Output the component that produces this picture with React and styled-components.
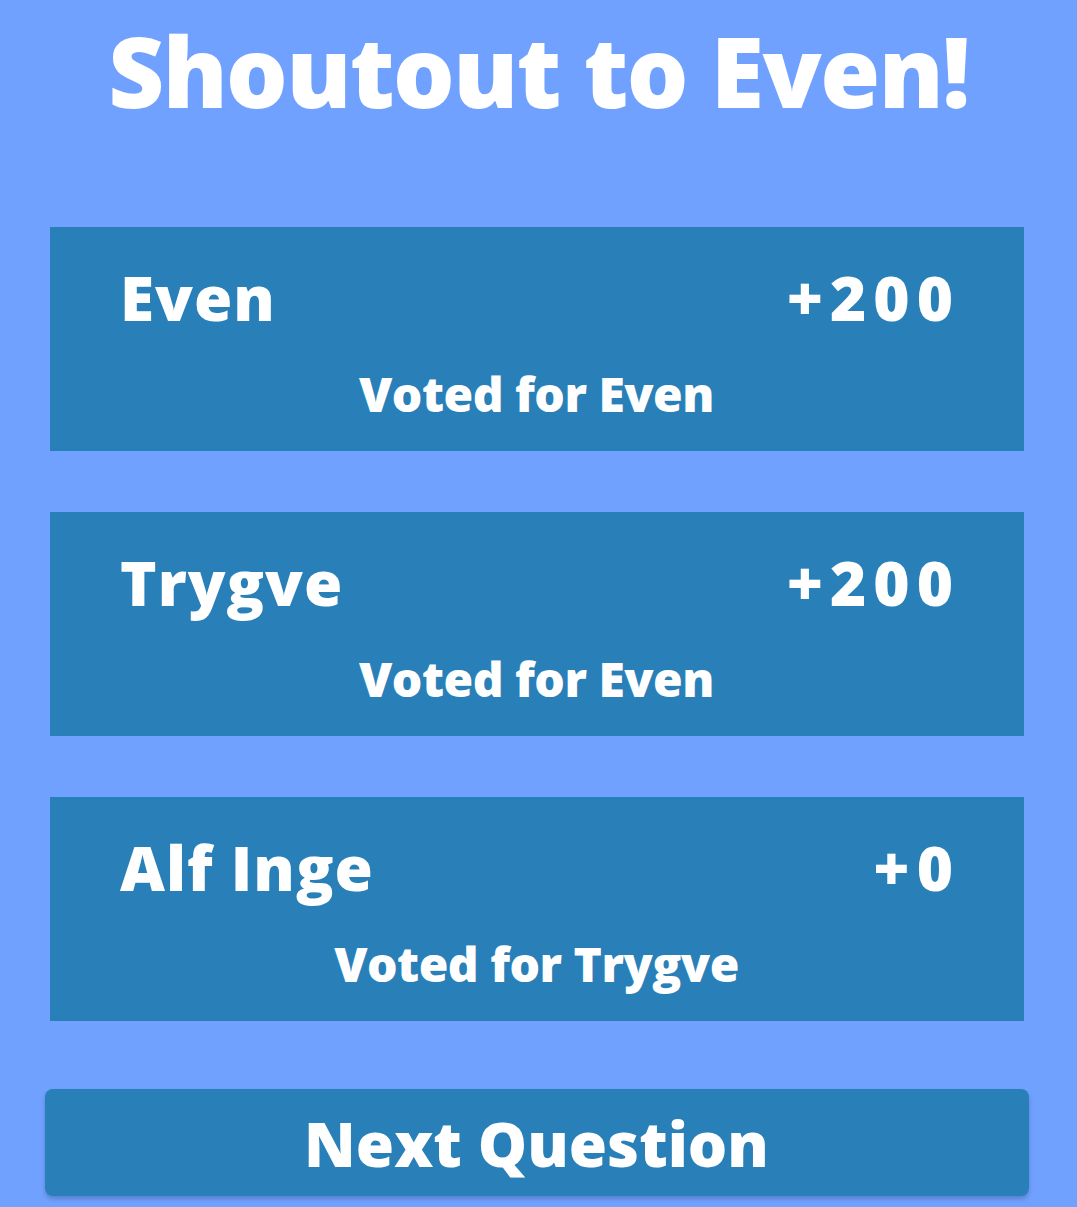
import React from "react";
import styled, { createGlobalStyle } from "styled-components";

const Global = createGlobalStyle`
  html, body { margin: 0; padding: 0; background: #70a1ff; }
  body { font-family: "Open Sans", Roboto, "Liberation Sans", sans-serif; color: #fff; }
`;

const Page = styled.div`
  width: 1077px;
  min-height: 1207px;
  box-sizing: border-box;
  display: flex;
  flex-direction: column;
  align-items: center;
  padding-top: 10px;
`;

const Title = styled.h1`
  margin: 0;
  font-weight: 800;
  font-size: 97px;
  line-height: 120px;
  letter-spacing: -1.5px;
  text-align: center;
`;

const List = styled.div`
  width: 974px;
  margin-top: 97px;
  margin-left: -3px;
  display: flex;
  flex-direction: column;
  gap: 61px;
`;

const Card = styled.div`
  background: #2980b9;
  height: 224px;
  box-sizing: border-box;
  padding: 32px 71px 0 70px;
  display: flex;
  flex-direction: column;
`;

const Row = styled.div`
  display: flex;
  justify-content: space-between;
  align-items: baseline;
  font-weight: 800;
  font-size: 62px;
  line-height: 76px;
`;

const Name = styled.span`
  letter-spacing: 1px;
`;

const Points = styled.span`
  letter-spacing: 7px;
  margin-right: -7px;
`;

const Voted = styled.div`
  text-align: center;
  font-weight: 800;
  font-size: 48px;
  line-height: 60px;
  margin-top: 29px;
  letter-spacing: -0.5px;
`;

const Button = styled.button`
  margin-top: 68px;
  margin-left: -4px;
  width: 984px;
  height: 107px;
  border: none;
  border-radius: 8px;
  background: #2980b9;
  color: #fff;
  font-family: inherit;
  font-weight: 800;
  font-size: 62px;
  box-shadow: 0 3px 4px rgba(0, 0, 0, 0.2);
  cursor: pointer;
`;

const players = [
  { name: "Even", points: "+200", vote: "Even" },
  { name: "Trygve", points: "+200", vote: "Even" },
  { name: "Alf Inge", points: "+0", vote: "Trygve" },
];

export default function App() {
  return (
    <>
      <Global />
      <Page>
        <Title>Shoutout to Even!</Title>
        <List>
          {players.map((p) => (
            <Card key={p.name}>
              <Row>
                <Name>{p.name}</Name>
                <Points>{p.points}</Points>
              </Row>
              <Voted>Voted for {p.vote}</Voted>
            </Card>
          ))}
        </List>
        <Button>Next Question</Button>
      </Page>
    </>
  );
}
